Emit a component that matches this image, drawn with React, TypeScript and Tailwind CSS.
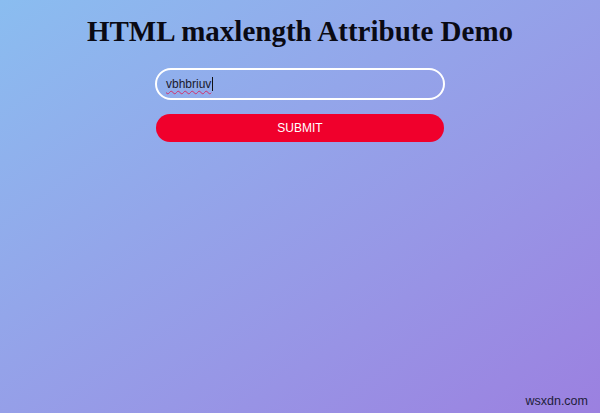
export default function App() {
  return (
    <div className="relative min-h-[413px] w-full bg-gradient-to-br from-[#8abdf0] to-[#9b80e0] font-['Liberation_Sans',Arial,sans-serif]">
      <div className="flex flex-col items-center pt-[14px]">
        <h1 className="font-['Liberation_Serif','Times_New_Roman',serif] text-[29px] font-bold leading-[34px] text-[#0a0a14]">
          HTML maxlength Attribute Demo
        </h1>
        <form className="mt-[20px] flex w-[290px] flex-col gap-[14px]">
          <div className="flex h-[32px] items-center rounded-full border-2 border-white px-[9px]">
            <span className="text-[12px] text-[#1a1a2e] underline decoration-[#d0306a] decoration-wavy decoration-1 underline-offset-2">
              vbhbriuv
            </span>
            <span className="ml-px h-[14px] w-px bg-[#111]" />
          </div>
          <button
            type="button"
            className="h-[28px] w-[288px] self-center rounded-full bg-[#f0002c] text-[12px] text-white"
          >
            SUBMIT
          </button>
        </form>
      </div>
      <div className="absolute bottom-[2px] right-[12px] text-[12.5px] text-[#1e1e3a]">
        wsxdn.com
      </div>
    </div>
  );
}
